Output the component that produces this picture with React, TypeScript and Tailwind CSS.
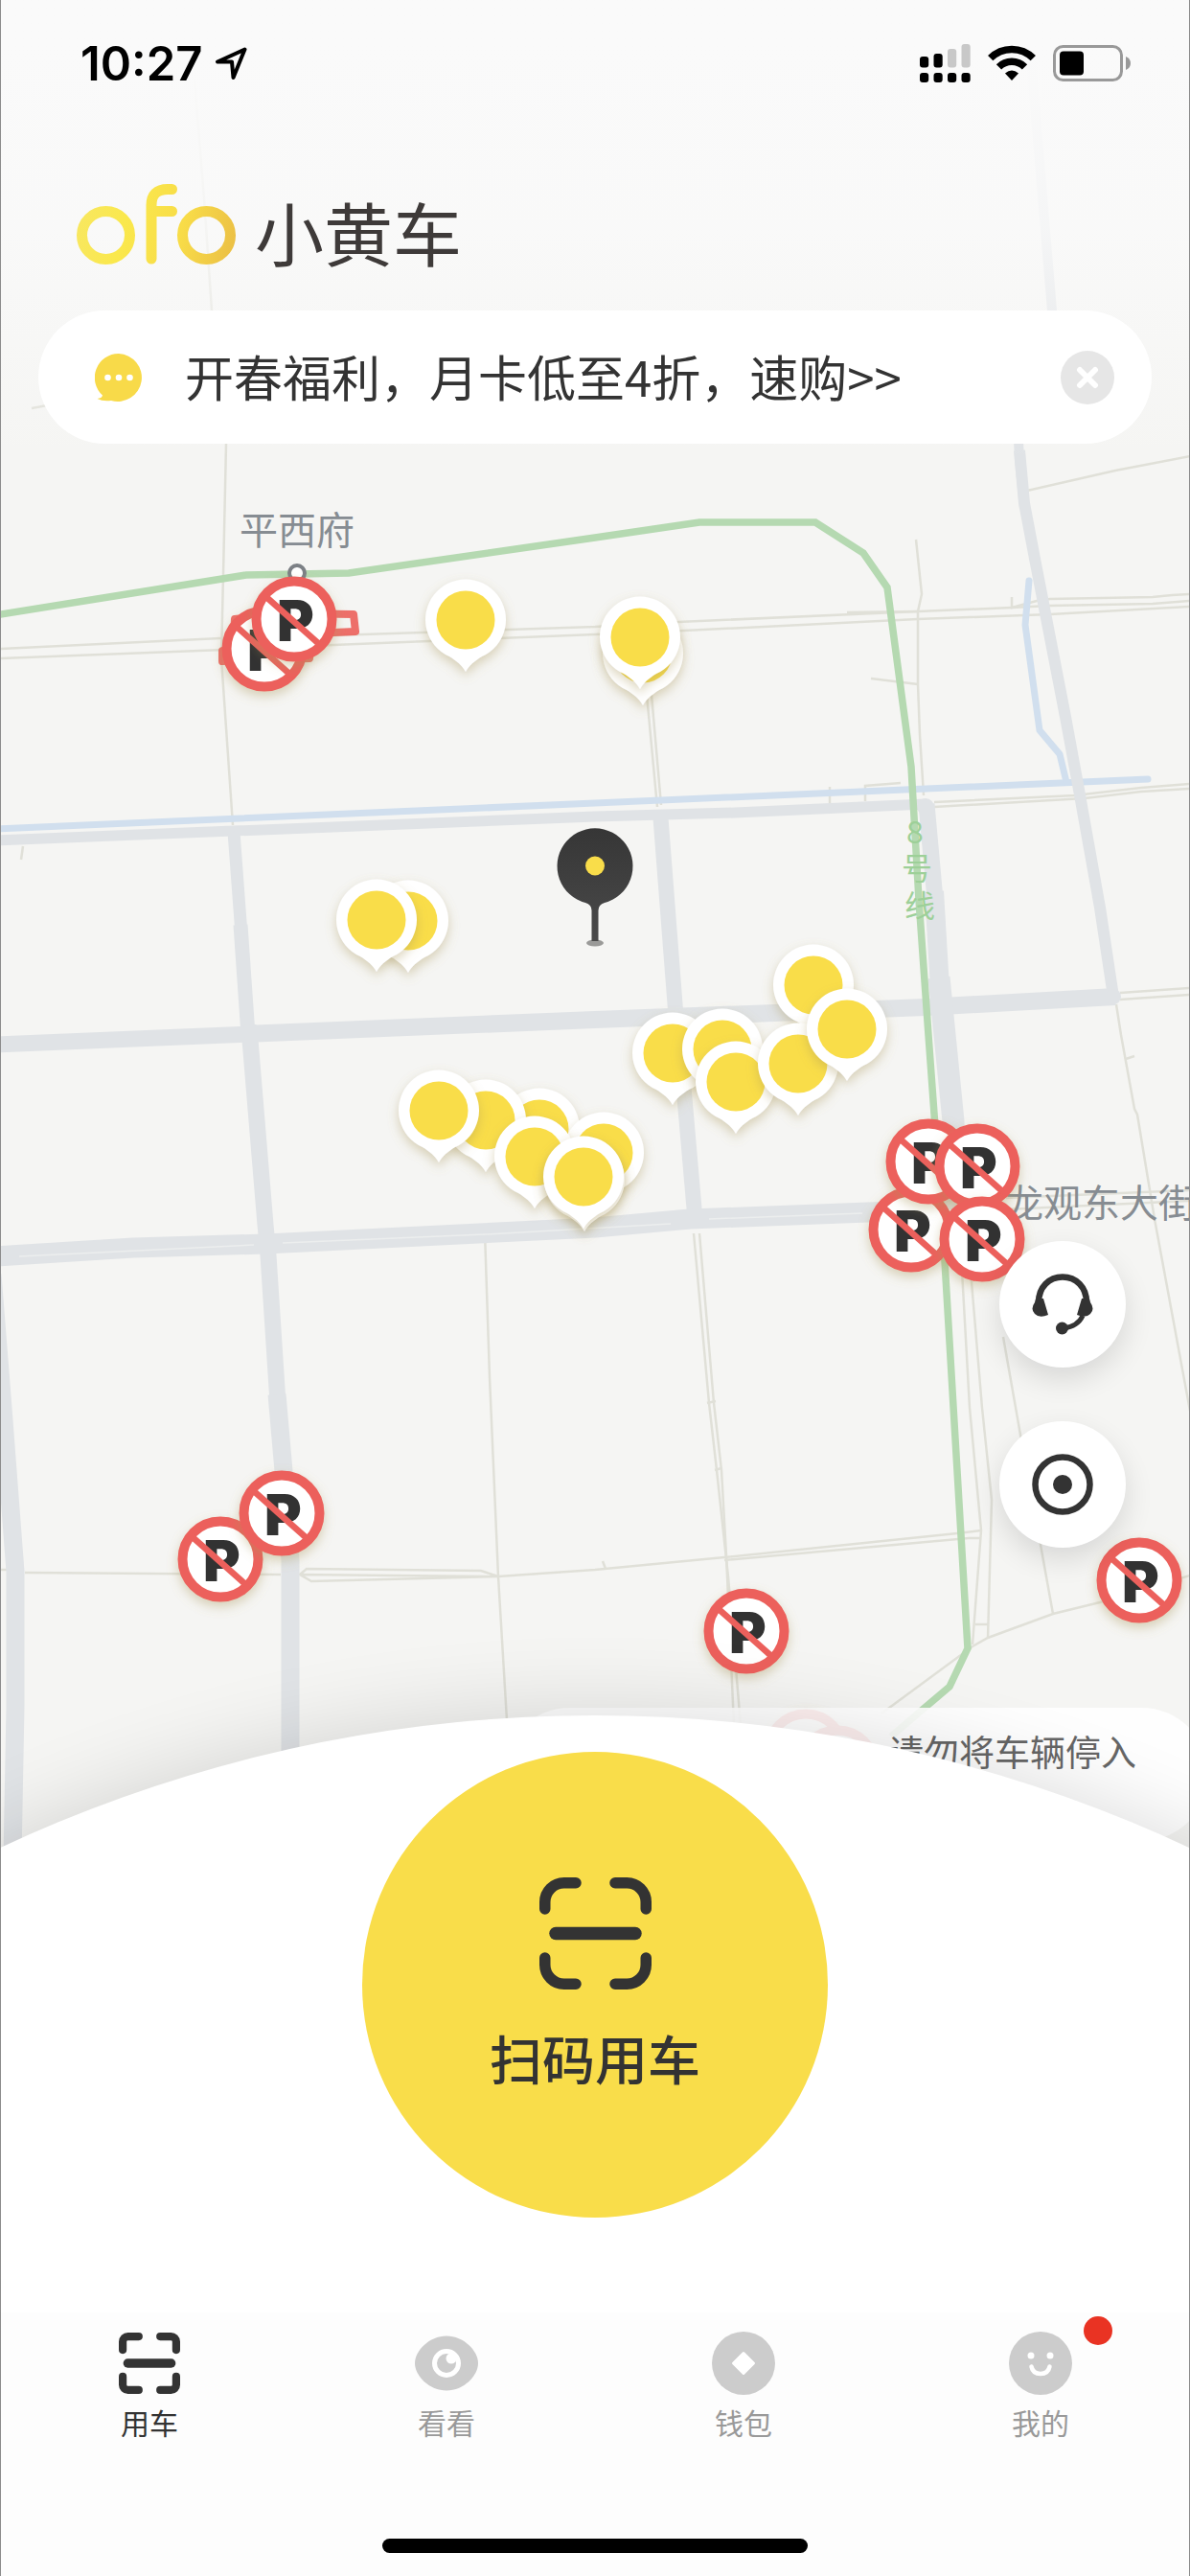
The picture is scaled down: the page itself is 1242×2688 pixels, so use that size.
import { useState } from 'react';

interface Point {
  x: number;
  y: number;
}

// Later entries are painted over earlier ones
const bikes: Point[] = [
  { x: 486, y: 647 },
  { x: 671, y: 682 },
  { x: 668, y: 665 },
  { x: 426, y: 961 },
  { x: 393, y: 960 },
  { x: 702, y: 1099 },
  { x: 754, y: 1095 },
  { x: 768, y: 1129 },
  { x: 849, y: 1028 },
  { x: 833, y: 1110 },
  { x: 884, y: 1074 },
  { x: 563, y: 1178 },
  { x: 507, y: 1169 },
  { x: 458, y: 1159 },
  { x: 630, y: 1203 },
  { x: 558, y: 1207 },
  { x: 610, y: 1231 },
  { x: 609, y: 1228 },
];

const noParking: Point[] = [
  { x: 276, y: 677 },
  { x: 307, y: 646 },
  { x: 951, y: 1283 },
  { x: 969, y: 1212 },
  { x: 1020, y: 1217 },
  { x: 1025, y: 1293 },
  { x: 230, y: 1627 },
  { x: 294, y: 1579 },
  { x: 779, y: 1702 },
  { x: 1189, y: 1649 },
  { x: 841, y: 1828 },
  { x: 874, y: 1845 },
];

const roads = [
  { width: 11, points: '-5,877 621,852 767,848 966,839' },
  { width: 13, points: '244,868 252,975' },
  { width: 15, points: '251,965 259,1080' },
  { width: 17, points: '259,1070 261,1085 277,1278 280,1310 290,1464' },
  { width: 19, points: '289,1455 296,1535 303,1628 303,1850' },
  { width: 17, points: '-5,1090 261,1079' },
  { width: 18, points: '255,1079 621,1064 966,1051 1164,1040' },
  { width: 16, points: '689,847 705,1054 714,1140 726,1278' },
  { width: 10, points: '1072,10 1082,133 1098,324 1080,400 1062,440 1064,480 1069,530' },
  { width: 12, points: '1064,470 1069,525 1080,583 1112,748 1126,824 1148,947 1162,1040' },
  { width: 17, points: '967,839 976,939' },
  { width: 20, points: '975,930 981,1031' },
  { width: 23, points: '980,1020 986,1080 995,1170 995,1262' },
  { width: 21, points: '-5,1311 139,1302 277,1298 621,1281 720,1272 906,1265 990,1262' },
  { width: 19, points: '-8,1330 3,1469 16,1640 16,1780 13,1940' },
];

const lanes = [
  '203,83 213,207 221,324 236,463 233,600 231,687 243,861',
  '0,677 230,666 348,663 621,654 708,649 958,638 1056,634 1096,632 1203,630 1242,627',
  '0,687 234,678 348,673 621,662 714,658 958,646 1096,641 1242,633',
  '884,639 958,638',
  '1056,623 1056,634 1082,627 1096,625 1203,623 1223,621 1242,620',
  '956,563 962,620 958,638 958,714 960,767 964,830',
  '909,708 958,714',
  '1072,512 1164,491 1242,476',
  '33,426 60,421',
  '675,725 686,842',
  '680,725 690,840',
  '866,821 866,840',
  '940,817 903,820 903,836',
  '975,837 1122,830 1191,822 1242,818',
  '975,842 1132,833 1191,826 1242,823',
  '1169,1036 1242,1031',
  '1169,1043 1242,1038',
  '1165,1048 1170,1080 1184,1157 1187,1163 1205,1272 1242,1472',
  '1175,1105 1184,1102',
  '24,883 22,897',
  '506,1286 511,1437 520,1645 529,1795',
  '26,1641 293,1643',
  '0,1638 7,1638',
  '313,1643 320,1637 502,1639 520,1645 325,1650 313,1643 520,1645 621,1638 756,1625 999,1600 1024,1597',
  '756,1628 1011,1605 1024,1605',
  '629,1629 632,1637',
  '724,1287 740,1464 748,1534 760,1645 773,1800',
  '730,1287 745,1464 753,1534 758,1623 766,1800',
  '738,1464 747,1462',
  '746,1534 753,1532',
  '1002,1290 1012,1469 1024,1597 1015,1716',
  '1010,1290 1025,1469 1035,1565 1031,1710',
  '1018,1695 1031,1695',
  '920,1788 1015,1718 1031,1709 1099,1684 1148,1672 1242,1644',
  '1099,1684 1086,1612 1065,1497 1047,1395',
  '1050,1250 1242,1242',
  '1050,1262 1242,1253',
];

function BikePin({ x, y }: Point) {
  return (
    <g transform={`translate(${x} ${y})`} filter="url(#pin-shadow)">
      <path d="M0 54C-4 47-9 43-17 38A42 42 0 1 1 17 38C9 43 4 47 0 54Z" fill="#fff" />
      <circle r="30.5" fill="#f9dd4a" />
    </g>
  );
}

function NoParkingSign({ x, y }: Point) {
  return (
    <g transform={`translate(${x} ${y})`} filter="url(#pin-shadow)">
      <circle r="39.5" fill="#fff" stroke="#ec605b" strokeWidth="10" />
      <text x="-18" y="23" fontSize="59" fontWeight="900" fill="#333" fontFamily="Inter, sans-serif">
        P
      </text>
      <path d="M-29-23 26 26" stroke="#ec605b" strokeWidth="6.5" />
    </g>
  );
}

function CityMap() {
  return (
    <svg
      className="absolute top-0 -left-px w-[calc(100%+2px)] max-w-none"
      viewBox="0 0 1242 2000"
      role="img"
      aria-label="地图"
      fontFamily="'Noto Sans CJK SC', sans-serif"
    >
      <defs>
        <filter id="pin-shadow" x="-40%" y="-40%" width="180%" height="180%">
          <feDropShadow dx="0" dy="5" stdDeviation="6" floodColor="#a8955a" floodOpacity="0.4" />
        </filter>
        <linearGradient id="pointer" x1="0" y1="0" x2="0" y2="1">
          <stop offset="0" stopColor="#363636" />
          <stop offset="1" stopColor="#4a4a4a" />
        </linearGradient>
      </defs>

      <g fill="none" stroke="#e0e0d8" strokeWidth="2.5">
        {lanes.map((points) => (
          <polyline key={points} points={points} />
        ))}
      </g>

      {/* Rivers */}
      <g fill="none" stroke="#d1dfee" strokeWidth="7" strokeLinecap="round" strokeLinejoin="round">
        <polyline points="-5,865 621,838 1198,813" />
        <polyline points="1074,606 1070,652 1085,762 1106,787 1113,816" />
      </g>

      <g fill="none" stroke="#e0e3e6" strokeLinejoin="round">
        {roads.map((road) => (
          <polyline key={road.points} points={road.points} strokeWidth={road.width} />
        ))}
      </g>
      <circle cx="966" cy="842" r="9" fill="#e0e3e6" />
      <circle cx="1162" cy="1040" r="8" fill="#e0e3e6" />
      <g fill="none" stroke="#eceeee" strokeWidth="1.5">
        <path d="M20 1311 265 1299M295 1297 506 1288 700 1277M740 1272 900 1266" />
      </g>

      {/* Line 8 */}
      <polyline
        points="-5,642 257,600 364,598 621,561 730,545 851,545 901,577 926,613 951,800 959,939 969,1080 985,1299 1010,1720 991,1760 965,1782 930,1812"
        fill="none"
        stroke="#b5d9b1"
        strokeWidth="7.5"
      />
      <circle cx="310" cy="598" r="8" fill="#fff" stroke="#7c8085" strokeWidth="4" />

      <g fill="#868c92" fontSize="40">
        <text x="250" y="568">平西府</text>
        <text x="1049" y="1270">龙观东大街</text>
      </g>
      <g fill="#9dd098" fontSize="32" textAnchor="middle">
        <text x="955" y="880">8</text>
        <text x="957" y="918">号</text>
        <text x="960" y="957">线</text>
      </g>

      <path
        d="M245 646 300 640 369 641 371 659 325 661 323 687 232 690 232 679 243 676Z"
        fill="none"
        stroke="#ec605b"
        strokeOpacity="0.9"
        strokeWidth="8"
        strokeLinejoin="round"
      />

      {noParking.map((sign) => (
        <NoParkingSign key={`${sign.x}-${sign.y}`} {...sign} />
      ))}
      {bikes.map((bike) => (
        <BikePin key={`${bike.x}-${bike.y}`} {...bike} />
      ))}

      {/* Current position */}
      <ellipse cx="621" cy="984" rx="9" ry="3.5" fill="#9a9a98" />
      <path
        d="M617.5 982V950Q617.5 944 611 942A39.5 39.5 0 1 1 631 942Q624.5 944 624.5 950V982Z"
        fill="url(#pointer)"
      />
      <circle cx="621" cy="903.5" r="10" fill="#f9dd4a" />
    </svg>
  );
}

function StatusBar() {
  return (
    <div className="flex h-[132px] items-center justify-between pr-[60px] pl-[83px]">
      <div className="flex items-center gap-3">
        <span className="font-['Inter',sans-serif] text-[49px] leading-none font-semibold text-black">10:27</span>
        <svg className="h-[36px] w-[36px]" viewBox="0 0 36 36" fill="none" stroke="#000" strokeWidth="4" strokeLinejoin="round">
          <path d="M32.5 3.5 4 16.500H19L20.500 33Z" />
        </svg>
      </div>
      <div className="flex items-center gap-[18px]">
        <svg className="h-[40px] w-[53px]" viewBox="0 0 53 40">
          <g fill="#000">
            <rect x="0" y="13" width="9.2" height="11.5" rx="3" />
            <rect x="14.5" y="10" width="9.2" height="14.5" rx="3" />
            <rect x="0" y="30" width="9.2" height="10" rx="3" />
            <rect x="14.5" y="30" width="9.2" height="10" rx="3" />
            <rect x="29" y="30" width="9.2" height="10" rx="3" />
            <rect x="43.5" y="30" width="9.2" height="10" rx="3" />
          </g>
          <g fill="#c8c8c8">
            <rect x="29" y="5" width="9.2" height="19.5" rx="3" />
            <rect x="43.5" y="0" width="9.2" height="24.5" rx="3" />
          </g>
        </svg>
        <svg className="h-[38px] w-[50px]" viewBox="0 0 50 38">
          <g fill="none" stroke="#000" strokeWidth="7.5">
            <path d="M2.7 13.7A31.5 31.5 0 0 1 47.3 13.7" />
            <path d="M11.5 22.8A19 19 0 0 1 38.5 22.8" />
          </g>
          <path d="M25 37 18 29.5Q25 23.500 32 29.5Z" fill="#000" />
        </svg>
        <svg className="h-[38px] w-[82px]" viewBox="0 0 82 38">
          <rect x="1.5" y="1.5" width="70" height="35" rx="9" fill="none" stroke="#999" strokeWidth="3" />
          <rect x="7" y="6.5" width="25" height="25" rx="4" fill="#000" />
          <path d="M76 12Q81 14 81 19T76 26Z" fill="#999" />
        </svg>
      </div>
    </div>
  );
}

function OfoMark() {
  return (
    <svg className="h-[84px] w-[166px]" viewBox="0 0 166 84" fill="none" role="img" aria-label="ofo">
      <defs>
        <linearGradient id="ofo-tone" gradientUnits="userSpaceOnUse" x1="0" y1="30" x2="166" y2="70">
          <stop offset="0" stopColor="#f8e761" />
          <stop offset="0.3" stopColor="#fae84c" />
          <stop offset="0.65" stopColor="#f8dc48" />
          <stop offset="1" stopColor="#ebbf45" />
        </linearGradient>
      </defs>
      <g stroke="url(#ofo-tone)" strokeWidth="11" strokeLinecap="round">
        <circle cx="30.5" cy="53.5" r="25" />
        <circle cx="135.5" cy="53.5" r="25" />
        <path d="M78 78V22Q78 5.5 95 5.5H99.5M78 28.5H99.5" />
      </g>
    </svg>
  );
}

function ScanIcon({ className, stroke, radius }: { className: string; stroke: number; radius: number }) {
  const near = stroke / 2;
  const far = 117 - near;
  const turn = near + radius;
  const back = far - radius;
  return (
    <svg className={className} viewBox="0 0 117 117" fill="none" stroke="#333" strokeLinecap="round">
      <path
        strokeWidth={stroke}
        d={`M${near} 33V${turn}A${radius} ${radius} 0 0 1 ${turn} ${near}H38M79 ${near}H${back}A${radius} ${radius} 0 0 1 ${far} ${turn}V33M${far} 84V${back}A${radius} ${radius} 0 0 1 ${back} ${far}H79M38 ${far}H${turn}A${radius} ${radius} 0 0 1 ${near} ${back}V84`}
      />
      <path strokeWidth={stroke + 2} d="M17 58.5H100" />
    </svg>
  );
}

function EyeIcon() {
  return (
    <svg className="h-[66px] w-[66px]" viewBox="0 0 66 66">
      <path
        d="M33 4.500C51 4.500 66 20 66 33S51 61.500 33 61.500 0 46 0 33 15 4.500 33 4.500Z"
        fill="#ccc"
      />
      <circle cx="33" cy="33" r="12.5" fill="none" stroke="#fff" strokeWidth="5" />
      <circle cx="38" cy="28" r="5.5" fill="#fff" />
    </svg>
  );
}

function WalletIcon() {
  return (
    <svg className="h-[66px] w-[66px]" viewBox="0 0 66 66">
      <circle cx="33" cy="33" r="33" fill="#ccc" />
      <path d="M33 22.5 43.5 33 33 43.500 22.5 33Z" fill="#fff" stroke="#fff" strokeWidth="3" strokeLinejoin="round" />
    </svg>
  );
}

function FaceIcon() {
  return (
    <svg className="h-[66px] w-[66px]" viewBox="0 0 66 66">
      <circle cx="33" cy="33" r="33" fill="#ccc" />
      <circle cx="23" cy="25" r="3.5" fill="#fff" />
      <circle cx="43" cy="25" r="3.5" fill="#fff" />
      <path d="M23.5 36.5Q25 44 33 44T42.5 36.5" fill="none" stroke="#fff" strokeWidth="4.5" strokeLinecap="round" />
    </svg>
  );
}

const tabs = [
  { id: 'ride', label: '用车', icon: <ScanIcon className="h-[64px] w-[64px]" stroke={15} radius={10} /> },
  { id: 'look', label: '看看', icon: <EyeIcon /> },
  { id: 'wallet', label: '钱包', icon: <WalletIcon /> },
  { id: 'mine', label: '我的', icon: <FaceIcon />, unread: true },
];

const App = () => {
  const [activeTab, setActiveTab] = useState('ride');
  const [noticeOpen, setNoticeOpen] = useState(true);

  return (
    <div className="relative flex min-h-screen flex-col overflow-hidden border-x border-[#8c8c8c] bg-[#f5f5f3] font-['Noto_Sans_CJK_SC',sans-serif] text-[#333]">
      <CityMap />

      <header className="relative bg-linear-to-b from-[#fafafa] from-10% via-[#fafafa]/80 via-50% to-transparent pb-4">
        <StatusBar />
        <div className="flex items-end gap-5 pt-[60px] pl-[79px]">
          <OfoMark />
          <span className="h-[66px] text-[72px] leading-[62px] text-[#3e3a39]">小黄车</span>
        </div>
        {noticeOpen && (
          <div className="mx-[39px] mt-12 flex h-[139px] items-center rounded-full bg-white pr-[39px] pl-[59px]">
            <svg className="h-[50px] w-[50px] shrink-0" viewBox="0 0 50 50">
              <path d="M25 0A25 25 0 1 1 17 49Q8 50 2.5 47Q7.500 46.500 8 43.500A25 25 0 0 1 25 0Z" fill="#f8da49" />
              <g fill="#fff">
                <circle cx="13.5" cy="25" r="3.3" />
                <circle cx="25" cy="25" r="3.3" />
                <circle cx="36.5" cy="25" r="3.3" />
              </g>
            </svg>
            <a href="#card" className="ml-11 flex-1 pb-1 text-[51px] leading-[72px]">
              开春福利，月卡低至4折，速购&gt;&gt;
            </a>
            <button
              type="button"
              aria-label="关闭"
              className="flex h-14 w-14 items-center justify-center rounded-full bg-[#e6e6e6]"
              onClick={() => setNoticeOpen(false)}
            >
              <svg className="h-6 w-6" viewBox="0 0 24 24" stroke="#fff" strokeWidth="6" strokeLinecap="round">
                <path d="M4 4 20 20M20 4 4 20" />
              </svg>
            </button>
          </div>
        )}
      </header>

      <main className="relative flex flex-1 flex-col">
        <div className="mt-auto mr-[66px] flex flex-col items-end gap-14">
          <button
            type="button"
            aria-label="客服"
            className="flex h-[132px] w-[132px] items-center justify-center rounded-full bg-white shadow-[0_12px_30px_rgba(0,0,0,0.12)]"
          >
            <svg className="h-[64px] w-[64px]" viewBox="0 0 64 64" fill="none">
              <path d="M7 30C7 14 18 3.5 32 3.5S57 14 57 30" stroke="#333" strokeWidth="6.5" />
              <path d="M12 26 17 43Q8 47 3 42T3 30L4 26ZM52 26 47 43Q56 47 61 42T61 30L60 26Z" fill="#333" />
              <path d="M53 44Q48 55 33 57" stroke="#333" strokeWidth="5" />
              <circle cx="31.5" cy="57" r="6.5" fill="#333" />
            </svg>
          </button>
          <button
            type="button"
            aria-label="定位"
            className="flex h-[132px] w-[132px] items-center justify-center rounded-full bg-white shadow-[0_12px_30px_rgba(0,0,0,0.12)]"
          >
            <svg className="h-[64px] w-[64px]" viewBox="0 0 64 64">
              <circle cx="32" cy="32" r="28.5" fill="none" stroke="#333" strokeWidth="6.5" />
              <circle cx="32" cy="32" r="10" fill="#333" />
            </svg>
          </button>
        </div>
        <p className="mt-[167px] -mr-5 -mb-[131px] ml-auto h-[139px] w-[736px] rounded-[70px] bg-white/90 pt-[18px] pr-[75px] text-right text-[37px] leading-[54px] text-[#666]">
          请勿将车辆停入
        </p>
      </main>

      <section className="relative flex h-[623px] flex-col items-center">
        <div className="absolute top-0 left-1/2 aspect-square w-[236%] -translate-x-1/2 rounded-full bg-white shadow-[0_0_90px_rgba(0,0,0,0.14)]" />
        <button
          type="button"
          className="relative mt-[38px] flex h-[486px] w-[486px] flex-col items-center rounded-full bg-[#f9dd4a] pt-[131px]"
        >
          <ScanIcon className="h-[117px] w-[117px]" stroke={11.5} radius={20} />
          <span className="mt-8 text-[55px] leading-[76px] font-medium">扫码用车</span>
        </button>
      </section>

      <nav className="relative flex h-[275px] flex-col bg-[#fdfdfd]">
        <div className="grid grid-cols-4">
          {tabs.map((tab) => (
            <button
              key={tab.id}
              type="button"
              aria-current={activeTab === tab.id ? 'page' : undefined}
              className="flex flex-col items-center pt-5"
              onClick={() => setActiveTab(tab.id)}
            >
              <span className="relative flex h-[66px] items-center">
                {tab.icon}
                {tab.unread && <span className="absolute -top-4 left-[78px] h-[30px] w-[30px] rounded-full bg-[#e93323]" />}
              </span>
              <span className={`mt-1.5 text-[30px] leading-[44px] ${activeTab === tab.id ? 'text-[#333]' : 'text-[#999]'}`}>
                {tab.label}
              </span>
            </button>
          ))}
        </div>
        <div className="mx-auto mt-auto mb-6 h-[15px] w-[444px] rounded-full bg-black" />
      </nav>
    </div>
  );
};

export default App;
